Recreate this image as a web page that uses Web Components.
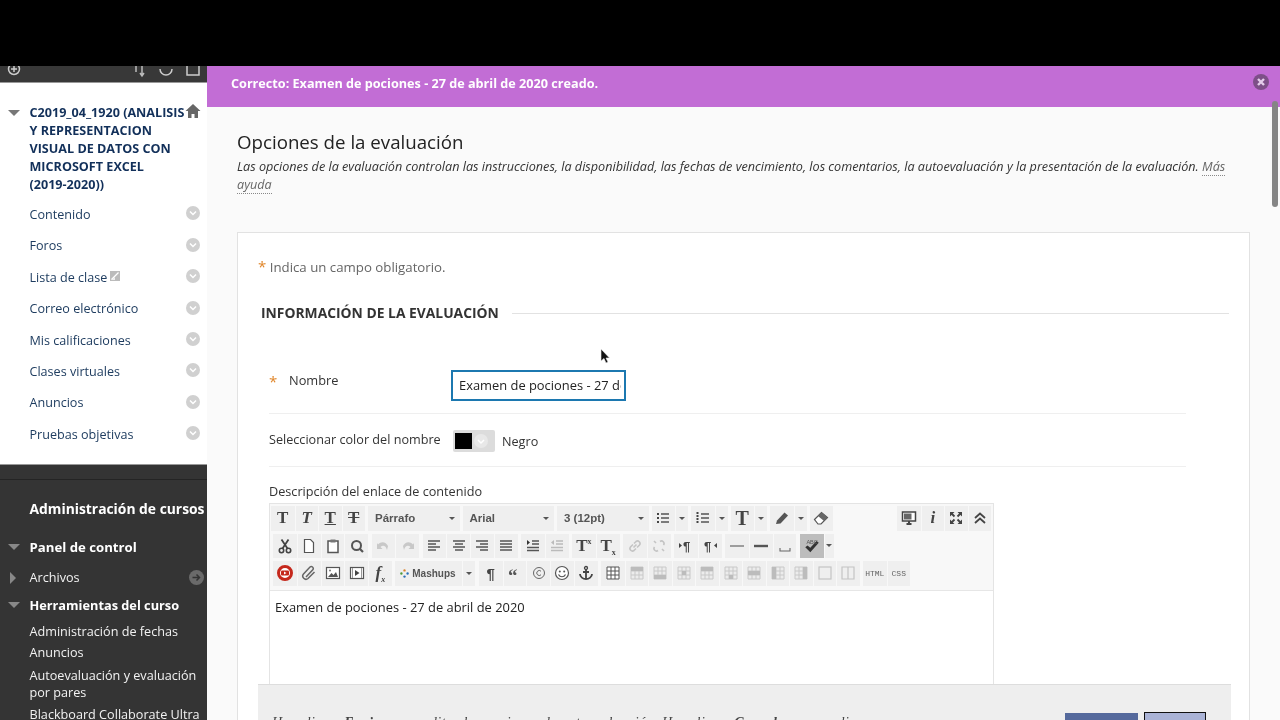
<!DOCTYPE html>
<html lang="es">
<head>
<meta charset="utf-8">
<title>Opciones de la evaluación</title>
<style>
  html, body { margin: 0; height: 720px; overflow: hidden; background: #000; }
  body { font-family: "Open Sans", "Liberation Sans", sans-serif; }
</style>
</head>
<body>
<bb-app>
  <bb-sidebar slot="side">
    <bb-course slot="course">C2019_04_1920 (ANALISIS Y REPRESENTACION VISUAL DE DATOS CON MICROSOFT EXCEL <span style="white-space:nowrap">(2019-2020))</span></bb-course>
    <bb-nav-item slot="nav">Contenido</bb-nav-item>
    <bb-nav-item slot="nav">Foros</bb-nav-item>
    <bb-nav-item slot="nav" ext>Lista de clase</bb-nav-item>
    <bb-nav-item slot="nav">Correo electrónico</bb-nav-item>
    <bb-nav-item slot="nav">Mis calificaciones</bb-nav-item>
    <bb-nav-item slot="nav">Clases virtuales</bb-nav-item>
    <bb-nav-item slot="nav">Anuncios</bb-nav-item>
    <bb-nav-item slot="nav">Pruebas objetivas</bb-nav-item>
    <bb-admin slot="admin"></bb-admin>
  </bb-sidebar>
  <bb-main slot="main">
    <bb-banner>Correcto: Examen de pociones - 27 de abril de 2020 creado.</bb-banner>
    <bb-form></bb-form>
  </bb-main>
</bb-app>

<script>
  // merged-cell table icons, only the shaded cell differs
  const cellIcon = (x, y, w, h) => `<path d="M2 2h12v12H2zM2 6h12M2 10h12M6 2v12M10 2v12" fill="#ececec" stroke="#c8c8c8" stroke-width="1"/><rect x="${x}" y="${y}" width="${w}" height="${h}" fill="#bcbcbc"/>`;

  // icon paths, all on a 16x16 box
  const ICONS = {
    cut: '<circle cx="4.5" cy="12.5" r="2.2" fill="none" stroke="#444" stroke-width="1.6"/><circle cx="11.5" cy="12.5" r="2.2" fill="none" stroke="#444" stroke-width="1.6"/><path d="M5.5 10.5 11.5 1.5M10.5 10.5 4.5 1.5" stroke="#444" stroke-width="1.8"/>',
    copy: '<path d="M3.5 1.5h6l3 3v10h-9z" fill="#fff" stroke="#555" stroke-width="1.2"/>',
    paste: '<path d="M3 3h10v11.5H3z" fill="#fff" stroke="#555" stroke-width="1.5"/><path d="M5.5 1.5h5v3h-5z" fill="#777"/>',
    find: '<circle cx="7.5" cy="7.5" r="4.5" fill="none" stroke="#555" stroke-width="2"/><path d="M10.5 10.5 14 14" stroke="#555" stroke-width="2.2"/>',
    undo: '<path d="M3 6.500C6 3 11 3.500 13 8l-1 4C11 8 8 6.500 5.500 9L7.500 11H2V5z" fill="#c8c8c8"/>',
    redo: '<path d="M13 6.500C10 3 5 3.500 3 8l1 4C5 8 8 6.500 10.500 9L8.500 11H14V5z" fill="#c8c8c8"/>',
    left: '<path d="M2 3h12M2 6h8M2 9h12M2 12h8" stroke="#555" stroke-width="1.4"/>',
    center: '<path d="M2 3h12M4 6h8M2 9h12M4 12h8" stroke="#555" stroke-width="1.4"/>',
    right: '<path d="M2 3h12M6 6h8M2 9h12M6 12h8" stroke="#555" stroke-width="1.4"/>',
    justify: '<path d="M2 3h12M2 6h12M2 9h12M2 12h12" stroke="#555" stroke-width="1.4"/>',
    indent: '<path d="M7 3h7M7 6h7M2 9.500h12M2 12.500h12" stroke="#555" stroke-width="1.4"/><path d="M2 2v5l3-2.500z" fill="#333"/>',
    outdent: '<path d="M7 3h7M7 6h7M2 9.500h12M2 12.500h12" stroke="#bbb" stroke-width="1.4"/><path d="M5 2v5L2 4.500z" fill="#bbb"/>',
    link: '<path d="M6.500 9.500 9.500 6.500M6 6.500 3.500 9a2.500 2.500 0 0 0 3.500 3.500L9 10.500M7 5.500 9 3.500A2.500 2.500 0 0 1 12.500 7L10 9.500" fill="none" stroke="#c4c4c4" stroke-width="1.6"/>',
    unlink: '<path d="M3.500 9a2.500 2.500 0 0 0 3.500 3.500M9 3.500A2.500 2.500 0 0 1 12.500 7M3 3l2 2M11 11l2 2" fill="none" stroke="#c4c4c4" stroke-width="1.6"/>',
    ltr: '<path d="M1 5v5l3-2.500z" fill="#444"/><text x="5" y="13" font-size="13" font-weight="700" font-family="Liberation Sans" fill="#444">¶</text>',
    rtl: '<path d="M15 5v5l-3-2.500z" fill="#444"/><text x="2" y="13" font-size="13" font-weight="700" font-family="Liberation Sans" fill="#444">¶</text>',
    hr: '<path d="M1 8h14" stroke="#666" stroke-width="1.2"/>',
    hrb: '<path d="M1 8h14" stroke="#555" stroke-width="2.4"/>',
    nbsp: '<path d="M3 10v3h10v-3" fill="none" stroke="#666" stroke-width="1.1"/>',
    spell: '<path d="M2 9l4.500 4.500L14 5l-2-1.500-5.500 6L4 7.500z" fill="#333"/><text x="3" y="6" font-size="5" font-family="Liberation Sans" fill="#555">ABC</text>',
    video: '<circle cx="8" cy="8" r="6.500" fill="#fff" stroke="#c5281c" stroke-width="3"/><rect x="4" y="5.500" width="8" height="5" rx="1" fill="#c5281c"/><path d="M7 6.500v3l2.500-1.500z" fill="#fff"/>',
    clip: '<path d="M5 12 12 4.500a2 2 0 0 0-3-2.500L2.500 9a3.200 3.200 0 0 0 4.500 4.500L13.500 7" fill="none" stroke="#666" stroke-width="1.500"/>',
    image: '<rect x="1.500" y="2.500" width="13" height="11" fill="#fff" stroke="#555" stroke-width="1.200"/><path d="M3 12l3.500-4 2 2 2.500-3 2 5z" fill="#555"/><circle cx="5" cy="5.500" r="1" fill="#777"/>',
    media: '<rect x="1.500" y="2.500" width="13" height="11" fill="#fff" stroke="#555" stroke-width="1.200"/><path d="M6 5v6l4.500-3z" fill="#444"/><path d="M3.500 3v10M12.500 3v10" stroke="#999"/>',
    quote: '<text x="1" y="17" font-size="19" font-weight="700" font-family="Liberation Serif" fill="#555">“</text>',
    smile: '<circle cx="8" cy="8" r="6.500" fill="#fff" stroke="#555" stroke-width="1.200"/><circle cx="5.800" cy="6.500" r="1" fill="#555"/><circle cx="10.200" cy="6.500" r="1" fill="#555"/><path d="M4.500 9.500c1.500 3 5.500 3 7 0" fill="none" stroke="#555" stroke-width="1.200"/>',
    copyr: '<circle cx="8" cy="8" r="5.500" fill="none" stroke="#666"/><path d="M10 6.200a2.500 2.500 0 1 0 0 3.600" fill="none" stroke="#666"/>',
    anchor: '<circle cx="8" cy="3" r="1.500" fill="none" stroke="#444" stroke-width="1.300"/><path d="M8 4.500V14M5 7h6" stroke="#444" stroke-width="1.800"/><path d="M2 9c0 3 3 5 6 5s6-2 6-5" fill="none" stroke="#444" stroke-width="1.800"/>',
    table: '<path d="M2 2h12v12H2zM2 6h12M2 10h12M6 2v12M10 2v12" fill="#fff" stroke="#555" stroke-width="1"/>',
    c1: cellIcon(2, 2, 12, 4),
    c2: cellIcon(2, 10, 12, 4),
    c3: cellIcon(6, 6, 4, 4),
    c4: cellIcon(2, 2, 12, 4),
    c5: cellIcon(6, 10, 4, 4),
    c6: cellIcon(2, 6, 12, 4),
    c7: cellIcon(2, 2, 4, 12),
    c8: cellIcon(10, 2, 4, 12),
    box: '<rect x="2" y="2" width="12" height="12" fill="none" stroke="#c4c4c4" stroke-width="1.200"/>',
    split: '<path d="M2 2h12v12H2zM8 2v12" fill="none" stroke="#c4c4c4" stroke-width="1.200"/>',
    bullets: '<path d="M6 4h8M6 8h8M6 12h8" stroke="#555" stroke-width="1.500"/><path d="M2 4h2M2 8h2M2 12h2" stroke="#444" stroke-width="1.800"/>',
    numbers: '<path d="M6 4h8M6 8h8M6 12h8" stroke="#555" stroke-width="1.500"/><path d="M2.500 2v12" stroke="#444" stroke-width="2" stroke-dasharray="2 1"/>',
    pen: '<path d="M2 14l1-3.500L10.500 2.500l3.500 3-7.500 8z" fill="#555"/>',
    eraser: '<path d="M1.500 9.500 8.500 2.500l6 5-6.500 6.500H5z" fill="#fff" stroke="#555" stroke-width="1.200"/><path d="M5 6 8.500 2.500l6 5L11 11z" fill="#666"/>',
    preview: '<path d="M1.500 2h13v9h-13z" fill="#fff" stroke="#444" stroke-width="1.500"/><path d="M3 3.500h7.500v6H3z" fill="#666"/><path d="M5.500 14h5M8 11v3" stroke="#444" stroke-width="2"/>',
    full: '<path d="M2 2h4.500L2 6.500zM14 2H9.500L14 6.500zM2 14h4.500L2 9.500zM14 14H9.500L14 9.500z" fill="#444"/><path d="M3 3l3.500 3.500M13 3 9.500 6.500M3 13l3.500-3.500M13 13 9.500 9.500" stroke="#444" stroke-width="1.800"/>',
    collapse: '<path d="M3 8l5-4.500L13 8M3 13l5-4.500L13 13" fill="none" stroke="#444" stroke-width="1.800"/>',
    mash: '<circle cx="8" cy="3.500" r="1.700" fill="#d9812a"/><circle cx="3.500" cy="8" r="1.700" fill="#4f9a3a"/><circle cx="12.500" cy="8" r="1.700" fill="#2b6fb5"/><circle cx="8" cy="12.500" r="1.700" fill="#2b6fb5"/>'
  };

  // small helper so each class only carries its markup and styles
  function shadow(host, html) {
    const root = host.attachShadow({ mode: 'open' });
    root.innerHTML = html;
    return root;
  }
  function svg(name, size) {
    return `<svg width="${size}" height="${size}" viewBox="0 0 16 16">${ICONS[name]}</svg>`;
  }

  customElements.define('bb-app', class extends HTMLElement {
    constructor() {
      super();
      shadow(this, `<style>
        :host { display: grid; grid-template-columns: 207px 1fr; height: 654px; margin-top: 66px; overflow: hidden; position: relative; filter: blur(.35px); }
      </style><slot name="side"></slot><slot name="main"></slot>`);
    }
  });

  customElements.define('bb-sidebar', class extends HTMLElement {
    constructor() {
      super();
      shadow(this, `<style>
        :host { display: flex; flex-direction: column; height: 654px; overflow: hidden; background: #fff; }
        .tools { flex: none; display: flex; align-items: flex-end; justify-content: space-between; height: 17px; background: #383838; border-bottom: 1px solid #999; box-sizing: border-box; overflow: hidden; padding: 0 7px 0 7px; }
        .tools svg { display: block; margin-bottom: 3px; }
        .right { display: flex; gap: 13px; }
        .white { flex: none; height: 381px; padding: 21px 0 0 0; box-sizing: border-box; }
      </style>
      <div class="tools">
        <svg width="14" height="20" viewBox="0 0 14 20"><circle cx="7" cy="10" r="5.500" fill="none" stroke="#ccc" stroke-width="1.500"/><path d="M4 10h6M7 7v6" stroke="#ccc" stroke-width="1.500"/></svg>
        <div class="right">
          <svg width="14" height="20" viewBox="0 0 14 20"><path d="M4 4v9M10 7v10M8 14l2 3 2-3" fill="none" stroke="#bbb" stroke-width="1.500"/></svg>
          <svg width="14" height="20" viewBox="0 0 14 20"><path d="M1 10a6 6 0 0 0 12 0" fill="none" stroke="#ccc" stroke-width="1.500"/></svg>
          <svg width="14" height="20" viewBox="0 0 14 20"><path d="M1 5h12v11H1z" fill="none" stroke="#ccc" stroke-width="1.500"/></svg>
        </div>
      </div>
      <div class="white"><slot name="course"></slot><slot name="nav"></slot></div>
      <slot name="admin"></slot>`);
    }
  });

  customElements.define('bb-course', class extends HTMLElement {
    constructor() {
      super();
      shadow(this, `<style>
        :host { display: block; position: relative; padding: 0 22px 0 29.500px; margin-bottom: 4.800px; font-size: 12.600px; font-weight: 700; line-height: 18px; color: #12305a; }
        .arrow { position: absolute; left: 8px; top: 6px; width: 0; height: 0; border: 6px solid transparent; border-top: 6px solid #777; border-bottom: 0; }
        svg { position: absolute; left: 185px; top: -1px; }
        div { width: 160px; }
      </style><span class="arrow"></span><div><slot></slot></div>
      <svg width="16" height="16" viewBox="0 0 16 16"><path d="M8 1 0.500 8H3v7h3.500v-4h3v4H13V8h2.500z" fill="#666"/></svg>`);
    }
  });

  customElements.define('bb-nav-item', class extends HTMLElement {
    constructor() {
      super();
      const ext = this.hasAttribute('ext') ? '<svg class="ext" width="10" height="10" viewBox="0 0 10 10"><rect width="10" height="10" fill="#bbb"/><path d="M1.500 8.500 8.500 1.500" stroke="#fff" stroke-width="1.200"/><path d="M1 9h4V6z" fill="#eee"/></svg>' : '';
      shadow(this, `<style>
        :host { display: flex; align-items: center; height: 31.400px; padding: 0 7px 0 29.500px; font-size: 12.600px; color: #1f3d60; }
        .t { flex: 1; display: flex; align-items: center; gap: 3px; }
        .ext { margin-top: -3px; }
        svg.c { margin-top: -2px; }
      </style><span class="t"><slot></slot>${ext}</span>
      <svg class="c" width="14" height="14" viewBox="0 0 14 14"><circle cx="7" cy="7" r="7" fill="#d0d0d0"/><path d="M4 5.500 7 8.500 10 5.500" fill="none" stroke="#fff" stroke-width="1.500"/></svg>`);
    }
  });

  customElements.define('bb-admin', class extends HTMLElement {
    constructor() {
      super();
      shadow(this, `<style>
        :host { display: block; flex: 1; background: #343434; border-top: 1px solid #999; color: #f2f2f2; font-size: 13px; position: relative; }
        .rule { height: 14px; border-bottom: 1px solid #242424; }
        .title { font-size: 13.850px; font-weight: 700; color: #fff; padding: 19px 0 0 29.500px; line-height: 19px; white-space: nowrap; }
        .h { font-size: 13.200px; font-weight: 700; color: #fff; padding-left: 29.500px; position: relative; line-height: 18px; }
        .i { padding-left: 29.500px; line-height: 17px; font-size: 12.650px; position: relative; }
        .down::before { content: ""; position: absolute; left: 8px; top: 6px; border: 6px solid transparent; border-top: 6px solid #888; border-bottom: 0; }
        .side::before { content: ""; position: absolute; left: 10px; top: 3px; border: 6px solid transparent; border-left: 6px solid #888; border-right: 0; }
        svg { position: absolute; left: 189px; top: 1px; }
      </style>
      <div class="rule"></div>
      <div class="title">Administración de cursos</div>
      <div class="h down" style="margin-top:20px">Panel de control</div>
      <div class="i side" style="margin-top:13px">Archivos<svg width="15" height="15" viewBox="0 0 15 15"><circle cx="7.500" cy="7.500" r="7.500" fill="#6a6a6a"/><path d="M3.500 7.500h7M7.500 4.500l3 3-3 3" fill="none" stroke="#333" stroke-width="1.500"/></svg></div>
      <div class="h down" style="margin-top:10px;font-size:12.750px">Herramientas del curso</div>
      <div class="i" style="margin-top:9px">Administración de fechas</div>
      <div class="i" style="margin-top:4px">Anuncios</div>
      <div class="i" style="margin-top:6px">Autoevaluación y evaluación por pares</div>
      <div class="i" style="margin-top:5px;white-space:nowrap">Blackboard Collaborate Ultra</div>`);
    }
  });

  customElements.define('bb-main', class extends HTMLElement {
    constructor() {
      super();
      shadow(this, `<style>
        :host { display: block; height: 654px; overflow: hidden; background: #fafafa; position: relative; }
        .thumb { position: absolute; right: 2px; top: 35px; width: 6px; height: 106px; border-radius: 3px; background: #858585; }
      </style><slot></slot><div class="thumb"></div>`);
    }
  });

  customElements.define('bb-banner', class extends HTMLElement {
    constructor() {
      super();
      shadow(this, `<style>
        :host { display: flex; align-items: center; justify-content: space-between; height: 41px; padding: 0 11px 7px 24px; box-sizing: border-box; background: #c26dd5; color: #fff; font-size: 12.650px; font-weight: 700; }
        svg { margin-top: -2px; }
      </style><span><slot></slot></span>
      <svg width="16" height="16" viewBox="0 0 16 16"><circle cx="8" cy="8" r="8" fill="#7d4f88"/><path d="M5 5l6 6M11 5l-6 6" stroke="#e4cdea" stroke-width="2.400"/></svg>`);
    }
  });

  customElements.define('bb-form', class extends HTMLElement {
    constructor() {
      super();
      shadow(this, `<style>
        :host { display: block; padding: 24px 30px 0 30px; color: #333; }
        h1 { margin: 0; font-size: 18.700px; font-weight: 400; line-height: 22px; color: #222; }
        .help { margin: 4px 0 0; font-size: 12.640px; font-style: italic; line-height: 18px; color: #333; }
        .help span { color: #666; border-bottom: 1px dotted #888; }
        .card { margin-top: 39px; height: 600px; background: #fff; border: 1px solid #e2e2e2; box-sizing: border-box; padding: 24px 20px 0 20px; }
        .req { font-size: 13.250px; color: #666; line-height: 18px; white-space: nowrap; }
        .req b, .star { color: #e0862a; font-weight: 400; font-size: 15px; line-height: 18px; }
        .sec { display: flex; align-items: center; gap: 13px; margin: 28px 0 0 3px; font-size: 13.850px; font-weight: 700; color: #333; line-height: 18px; }
        .sec::after { content: ""; flex: 1; border-top: 1px solid #e2e2e2; }
        .rows { margin: 0 43px 0 11px; }
        .row { display: flex; box-sizing: border-box; border-bottom: 1px solid #efefef; }
        .one { height: 68px; margin-top: 24px; padding-top: 24px; align-items: flex-start; font-size: 12.800px; line-height: 18px; }
        .one .star { width: 20px; padding: 2px 0 0 0; box-sizing: border-box; }
        .one label { width: 162px; margin-top: 1px; }
        .field { width: 175px; height: 31px; box-sizing: border-box; border: 2px solid #1c78b0; padding: 0 6px; font-size: 12.900px; line-height: 27px; color: #222; }
        .field div { width: 162px; overflow: hidden; white-space: nowrap; }
        .two { height: 53px; align-items: center; font-size: 12.650px; }
        .two label { width: 184px; padding-bottom: 2px; }
        .swatch { display: flex; align-items: center; width: 42px; height: 22px; background: #dcdcdc; border-radius: 2px; padding-left: 2px; box-sizing: border-box; margin: 1px 7px 0 0; }
        .swatch i { width: 17px; height: 16px; background: #000; }
        .neg { margin-top: 1px; }
        .desc { font-size: 12.680px; margin-top: 15px; line-height: 18px; }
      </style>
      <h1>Opciones de la evaluación</h1>
      <p class="help">Las opciones de la evaluación controlan las instrucciones, la disponibilidad, las fechas de vencimiento, los comentarios, la autoevaluación y la presentación de la evaluación. <span>Más ayuda</span></p>
      <div class="card">
        <div class="req"><b>*</b> Indica un campo obligatorio.</div>
        <div class="sec">INFORMACIÓN DE LA EVALUACIÓN</div>
        <div class="rows">
          <div class="row one"><span class="star">*</span><label>Nombre</label><div class="field"><div>Examen de pociones - 27 de abril de 2020</div></div></div>
          <div class="row two"><label>Seleccionar color del nombre</label><span class="swatch"><i></i><svg width="18" height="18" viewBox="0 0 18 18"><circle cx="9" cy="9" r="7" fill="#e8e8e8"/><path d="M6 8l3 3 3-3" fill="none" stroke="#fff" stroke-width="1.500"/></svg></span><span class="neg">Negro</span></div>
          <div class="desc">Descripción del enlace de contenido</div>
          <bb-editor>Examen de pociones - 27 de abril de 2020</bb-editor>
        </div>
      </div>
      <bb-submit></bb-submit>
      <svg style="position:absolute;left:393px;top:282px" width="10" height="16" viewBox="0 0 10 16"><path d="M1 1v12l3-2.500 2 4.500 2-1-2-4h3.500z" fill="#111" stroke="#eee" stroke-width=".6"/></svg>`);
    }
  });

  customElements.define('bb-editor', class extends HTMLElement {
    constructor() {
      super();
      const tool = (t) => {
        if (t.startsWith('t:')) {
          const [, text, css] = t.split('|');
          return `<span class="b" style="${css || ''}"><span>${text}</span></span>`;
        }
        return `<span class="b">${svg(t, 16)}</span>`;
      };
      const group = (list) => `<span class="g">${list.map(tool).join('')}</span>`;
      const caret = '<span class="caret"></span>';
      const serif = 'font:700 17px Liberation Serif,serif;color:#444;';
      shadow(this, `<style>
        :host { display: block; width: 725px; height: 300px; box-sizing: border-box; margin-top: 3px; border: 1px solid #e4e4e4; background: #fff; font-size: 12.900px; color: #222; }
        .bar { display: flex; flex-direction: column; gap: 3px; height: 87px; box-sizing: border-box; padding: 2px 2px 0 1px; background: #f8f8f8; border-bottom: 1px solid #e6e6e6; }
        .r { display: flex; gap: 3px; height: 24.500px; align-items: stretch; }
        .r.in { padding-left: 2px; gap: 3.500px; --w: 23.750px; }
        .g { display: flex; background: #efefef; }
        .b { width: var(--w, 23.500px); display: flex; align-items: center; justify-content: center; border-left: 1px solid #f8f8f8; box-sizing: border-box; }
        .tb { --w: 23.500px; }
        .g .b:first-child { border-left: 0; }
        .on { background: #bdbdbd; }
        .sel { display: flex; align-items: center; justify-content: space-between; width: 91.500px; padding: 0 5px 0 7px; box-sizing: border-box; background: #efefef; font: 700 11.500px "Liberation Sans", sans-serif; color: #555; }
        .caret { width: 0; height: 0; border: 3px solid transparent; border-top: 3px solid #555; border-bottom: 0; }
        .d { width: 13px; display: flex; align-items: center; justify-content: center; border-left: 1px solid #f8f8f8; box-sizing: border-box; }
        .push { margin-left: auto; }
        .body { padding: 7px 5px; line-height: 18px; }
        .mash { width: 80px; display: flex; align-items: center; padding-left: 4px; box-sizing: border-box; background: #efefef; font: 700 10px "Liberation Sans", sans-serif; color: #555; }
        .mash .t { width: 63px; display: flex; align-items: center; gap: 2px; }
      </style>
      <div class="bar">
        <div class="r">
          <span class="g">
            ${tool(`t:|T|${serif}`)}${tool(`t:|T|${serif}font-style:italic;`)}${tool(`t:|T|${serif}text-decoration:underline;`)}${tool(`t:|T|${serif}text-decoration:line-through;`)}
          </span>
          <span class="sel">Párrafo${caret}</span>
          <span class="sel">Arial${caret}</span>
          <span class="sel">3 (12pt)${caret}</span>
          <span class="g">${tool('bullets')}<span class="d">${caret}</span></span>
          <span class="g">${tool('numbers')}<span class="d">${caret}</span></span>
          <span class="g">${tool(`t:|T|${serif}font-size:20px;`)}<span class="d">${caret}</span></span>
          <span class="g">${tool('pen')}<span class="d">${caret}</span></span>
          ${group(['eraser'])}
          <span class="g push">${tool('preview')}${tool(`t:|i|${serif}font-style:italic;`)}${tool('full')}${tool('collapse')}</span>
        </div>
        <div class="r in">
          ${group(['cut', 'copy', 'paste', 'find'])}
          ${group(['undo', 'redo'])}
          ${group(['left', 'center', 'right', 'justify'])}
          ${group(['indent', 'outdent'])}
          <span class="g">${tool(`t:|T<sup style="font-size:8px;line-height:0">x</sup>|${serif}`)}${tool(`t:|T<sub style="font-size:8px;line-height:0">x</sub>|${serif}`)}</span>
          ${group(['link', 'unlink'])}
          ${group(['ltr', 'rtl'])}
          ${group(['hr', 'hrb', 'nbsp'])}
          <span class="g"><span class="b on">${svg('spell', 18)}</span><span class="d" style="width:10px">${caret}</span></span>
        </div>
        <div class="r in">
          <span class="g">${['video', 'clip', 'image', 'media'].map(tool).join('')}${tool(`t:|f<sub style="font-size:8px;line-height:0">x</sub>|${serif}font-style:italic;`)}</span>
          <span class="mash"><span class="t">${svg('mash', 11)}Mashups</span><span class="d" style="height:100%">${caret}</span></span>
          <span class="g">${tool(`t:|¶|font:700 15px Liberation Sans,sans-serif;color:#444;`)}${['quote', 'copyr', 'smile', 'anchor'].map(tool).join('')}</span>
          <span class="g tb">${['table', 'c1', 'c2', 'c3', 'c4', 'c5', 'c6', 'c7', 'c8', 'box', 'split'].map(tool).join('')}</span>
          <span class="g tb">${tool(`t:|HTML|font:8px Liberation Mono,monospace;color:#666;`)}${tool(`t:|CSS|font:8px Liberation Mono,monospace;color:#666;`)}</span>
        </div>
      </div>
      <div class="body"><slot></slot></div>`);
    }
  });

  // the submit bar is stuck over the bottom of the page, as in the real app
  customElements.define('bb-submit', class extends HTMLElement {
    constructor() {
      super();
      shadow(this, `<style>
        :host { position: absolute; left: 51px; bottom: 0; width: 973px; height: 36px; background: #eee; border-top: 1px solid #ddd; box-sizing: border-box; font: italic 14px "Liberation Serif", serif; color: #444; overflow: hidden; }
        p { position: absolute; left: 14px; top: 30px; margin: 0; white-space: nowrap; letter-spacing: .48px; }
        button { position: absolute; top: 28px; height: 20px; padding: 0; box-sizing: border-box; }
        .go { left: 807px; width: 73px; background: #55699c; border: 0; color: #fff; }
        .no { left: 886px; top: 27px; width: 62px; background: #aab3d6; border: 1px solid #111; }
      </style>
      <p>Haz clic en <b>Enviar</b> para editar las opciones de autoevaluación. Haz clic en <b>Cancelar</b> para salir.</p>
      <button class="go"></button><button class="no"></button>`);
    }
  });
</script>
</body>
</html>
